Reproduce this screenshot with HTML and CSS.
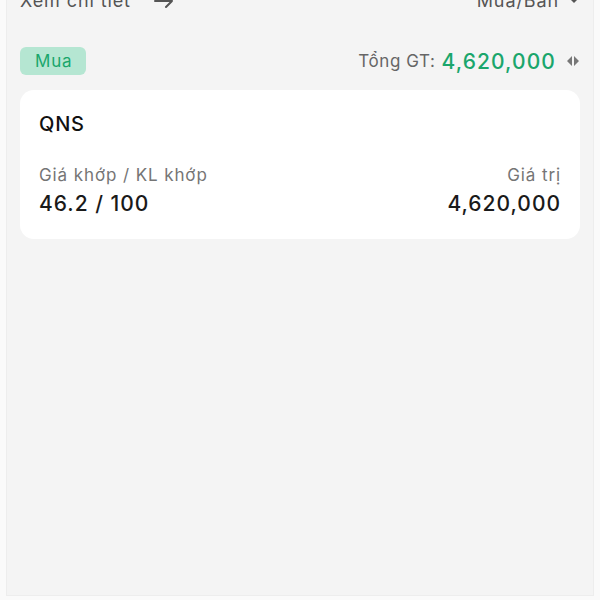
FILE: index.html
```html
<!DOCTYPE html>
<html lang="vi">
<head>
  <meta charset="UTF-8" />
  <meta name="viewport" content="width=device-width, initial-scale=1.0"/>
  <title>Lệnh khớp</title>
  <link rel="stylesheet" href="styles.css">
</head>
<body>
  <div class="frame">
    <div class="topbar">
      <a class="detail" href="#">Xem chi tiết
        <svg class="arrow" width="22" height="16" viewBox="0 0 22 16"><path d="M2 8h17M13 2l6 6-6 6" fill="none" stroke="#555" stroke-width="2" stroke-linecap="round" stroke-linejoin="round"/></svg>
      </a>
      <div class="filter">Mua/Bán
        <svg width="10" height="8" viewBox="0 0 10 8"><path d="M1 2l4 4 4-4z" fill="#555"/></svg>
      </div>
    </div>

    <div class="summary">
      <span class="badge">Mua</span>
      <div class="total">
        <span class="total-label">Tổng GT:</span>
        <span class="total-value">4,620,000</span>
        <svg class="swap" width="14" height="12" viewBox="0 0 14 12"><path d="M6 1L1 6l5 5zM8 1l5 5-5 5z" fill="#777"/></svg>
      </div>
    </div>

    <div class="card">
      <div class="symbol">QNS</div>
      <div class="row">
        <div class="col">
          <div class="label">Giá khớp / KL khớp</div>
          <div class="value">46.2 / 100</div>
        </div>
        <div class="col right">
          <div class="label">Giá trị</div>
          <div class="value">4,620,000</div>
        </div>
      </div>
    </div>
  </div>
</body>
</html>
```

FILE: styles.css
```css
body {
  margin: 0;
  background: #fafafa;
  font-family: Inter, "Noto Sans", sans-serif;
  overflow: hidden;
}
.frame {
  display: flow-root;
  height: 596px;
  margin: 0 6px;
  background: #f4f4f4;
  border-left: 1px solid #ededed;
  border-right: 1px solid #ededed;
  border-bottom: 1px solid #ededed;
  padding: 0 13px;
  box-sizing: border-box;
}
.topbar {
  display: flex;
  justify-content: space-between;
  align-items: center;
  margin-top: -11px;
  font-size: 18px;
  line-height: 24px;
  letter-spacing: 0.9px;
  color: #555;
}
.detail {
  display: flex;
  align-items: center;
  gap: 22px;
  color: #555;
  text-decoration: none;
}
.filter {
  display: flex;
  align-items: center;
  gap: 10px;
  margin-right: 1px;
}
.summary {
  display: flex;
  justify-content: space-between;
  align-items: center;
  margin-top: 34px;
}
.badge {
  background: #b5e6d2;
  color: #1aa66c;
  font-size: 17px;
  line-height: 28px;
  letter-spacing: 0.8px;
  padding: 0 14px 0 15px;
  border-radius: 6px;
}
.total {
  display: flex;
  align-items: center;
  gap: 6px;
}
.total-label {
  color: #666;
  font-size: 17px;
  letter-spacing: 0.6px;
}
.total-value {
  color: #1aa66c;
  font-size: 21px;
  font-weight: 500;
  letter-spacing: 1.1px;
}
.swap {
  margin-left: 4px;
}
.card {
  background: #fff;
  border-radius: 14px;
  margin-top: 15px;
  padding: 21px 19px 20px;
}
.symbol {
  font-size: 20px;
  line-height: 26px;
  font-weight: 500;
  color: #111;
  letter-spacing: 0.8px;
}
.row {
  display: flex;
  justify-content: space-between;
  margin-top: 26px;
}
.right {
  text-align: right;
}
.label {
  font-size: 17px;
  line-height: 24px;
  color: #757575;
  letter-spacing: 0.9px;
}
.value {
  margin-top: 2px;
  font-size: 21px;
  line-height: 30px;
  font-weight: 500;
  color: #1a1a1a;
  letter-spacing: 1px;
}
```
